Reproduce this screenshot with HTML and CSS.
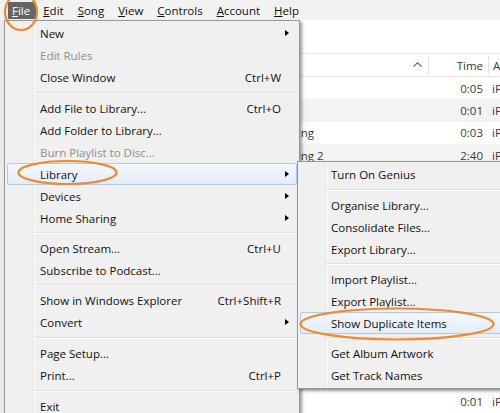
FILE: index.html
```html
<!DOCTYPE html>
<html>
<head>
<meta charset="utf-8">
<link rel="stylesheet" href="styles.css">
</head>
<body>
<div class="app">
  <nav class="menubar">
    <span class="mb-item active"><u>F</u>ile</span>
    <span class="mb-item"><u>E</u>dit</span>
    <span class="mb-item"><u>S</u>ong</span>
    <span class="mb-item"><u>V</u>iew</span>
    <span class="mb-item"><u>C</u>ontrols</span>
    <span class="mb-item"><u>A</u>ccount</span>
    <span class="mb-item"><u>H</u>elp</span>
  </nav>
  <div class="main">
    <div class="sidebar"></div>
    <div class="tracks">
      <div class="toolbar"></div>
      <div class="thead">
        <div class="c-name"><svg class="chev" width="9" height="5" viewBox="0 0 9 5"><polyline points="0.5,4.5 4.5,0.8 8.5,4.5" fill="none" stroke="#6d6d6d" stroke-width="1.2"/></svg></div>
        <div class="c-time">Time</div>
        <div class="c-artist">Artist</div>
      </div>
      <div class="row"><div class="c-name"></div><div class="c-time">0:05</div><div class="c-artist">iPhone</div></div>
      <div class="row alt"><div class="c-name"></div><div class="c-time">0:01</div><div class="c-artist">iPhone</div></div>
      <div class="row"><div class="c-name">New Recording</div><div class="c-time">0:03</div><div class="c-artist">iPhone</div></div>
      <div class="row alt"><div class="c-name">New Recording 2</div><div class="c-time">2:40</div><div class="c-artist">iPhone</div></div>
      <div class="row"><div class="c-name"></div><div class="c-time"></div><div class="c-artist"></div></div>
      <div class="row alt"><div class="c-name"></div><div class="c-time"></div><div class="c-artist"></div></div>
      <div class="row"><div class="c-name"></div><div class="c-time"></div><div class="c-artist"></div></div>
      <div class="row alt"><div class="c-name"></div><div class="c-time"></div><div class="c-artist"></div></div>
      <div class="row"><div class="c-name"></div><div class="c-time"></div><div class="c-artist"></div></div>
      <div class="row alt"><div class="c-name"></div><div class="c-time"></div><div class="c-artist"></div></div>
      <div class="row"><div class="c-name"></div><div class="c-time"></div><div class="c-artist"></div></div>
      <div class="row alt"><div class="c-name"></div><div class="c-time"></div><div class="c-artist"></div></div>
      <div class="row"><div class="c-name"></div><div class="c-time"></div><div class="c-artist"></div></div>
      <div class="row alt"><div class="c-name"></div><div class="c-time"></div><div class="c-artist"></div></div>
      <div class="row"><div class="c-name"></div><div class="c-time">0:01</div><div class="c-artist">iPhone</div></div>
    </div>
  </div>

  <div class="menu file-menu">
    <div class="mi"><span>New</span><i class="arrow"></i></div>
    <div class="mi dis"><span>Edit Rules</span></div>
    <div class="mi"><span>Close Window</span><span class="sc">Ctrl+W</span></div>
    <div class="sep s9"></div>
    <div class="mi"><span>Add File to Library...</span><span class="sc">Ctrl+O</span></div>
    <div class="mi"><span>Add Folder to Library...</span></div>
    <div class="mi dis"><span>Burn Playlist to Disc...</span></div>
    <div class="mi hl"><span>Library</span><i class="arrow"></i></div>
    <div class="mi"><span>Devices</span><i class="arrow"></i></div>
    <div class="mi"><span>Home Sharing</span><i class="arrow"></i></div>
    <div class="sep"></div>
    <div class="mi"><span>Open Stream...</span><span class="sc">Ctrl+U</span></div>
    <div class="mi"><span>Subscribe to Podcast...</span></div>
    <div class="sep"></div>
    <div class="mi"><span>Show in Windows Explorer</span><span class="sc">Ctrl+Shift+R</span></div>
    <div class="mi"><span>Convert</span><i class="arrow"></i></div>
    <div class="sep s9"></div>
    <div class="mi"><span>Page Setup...</span></div>
    <div class="mi"><span>Print...</span><span class="sc">Ctrl+P</span></div>
    <div class="sep s9"></div>
    <div class="mi"><span>Exit</span></div>
  </div>

  <div class="menu sub-menu">
    <div class="mi"><span>Turn On Genius</span></div>
    <div class="sep s9"></div>
    <div class="mi"><span>Organise Library...</span></div>
    <div class="mi"><span>Consolidate Files...</span></div>
    <div class="mi"><span>Export Library...</span></div>
    <div class="sep"></div>
    <div class="mi"><span>Import Playlist...</span></div>
    <div class="mi"><span>Export Playlist...</span></div>
    <div class="mi hl"><span>Show Duplicate Items</span></div>
    <div class="sep"></div>
    <div class="mi"><span>Get Album Artwork</span></div>
    <div class="mi"><span>Get Track Names</span></div>
  </div>

  <svg class="annot" width="500" height="413" viewBox="0 0 500 413">
    <ellipse cx="21" cy="12" rx="16" ry="18" fill="none" stroke="#f08a2c" stroke-width="2.2"/>
    <ellipse cx="67.5" cy="172.5" rx="49" ry="11.5" fill="none" stroke="#f08a2c" stroke-width="2.2"/>
    <ellipse cx="397" cy="324" rx="96.5" ry="15.5" fill="none" stroke="#f08a2c" stroke-width="2.2"/>
  </svg>
</div>
</body>
</html>
```

FILE: styles.css
```css
* { box-sizing: border-box; }
html, body { margin: 0; padding: 0; }
body {
  font-family: "Open Sans", "Noto Sans", "DejaVu Sans", sans-serif;
  font-size: 11.5px;
  color: #111;
  background: #fff;
}
.app {
  position: relative;
  width: 500px;
  height: 413px;
  overflow: hidden;
  background: #fff;
  display: flex;
  flex-direction: column;
}

/* menu bar */
.menubar {
  height: 20px;
  flex: none;
  background: #f2f2f2;
  display: flex;
  align-items: flex-start;
  padding: 2px 0 0 8px;
}
.mb-item {
  padding: 0 7px;
  height: 17px;
  line-height: 17px;
  color: #111;
  white-space: nowrap;
}
.mb-item u { text-underline-offset: 1px; }
.mb-item.active {
  background: #656565;
  color: #fff;
  padding: 0 6px 0 4px;
}

/* window content */
.main { flex: 1; display: flex; min-height: 0; }
.sidebar { width: 4px; flex: none; background: #ebebeb; }
.tracks { flex: 1; display: flex; flex-direction: column; min-width: 0; }
.toolbar { height: 33px; flex: none; background: #fff; }
.thead {
  height: 24px;
  flex: none;
  border-top: 1px solid #e4e4e4;
  border-bottom: 1px solid #e4e4e4;
  display: flex;
  padding: 2px 0;
  color: #3a3a3a;
}
.c-name {
  width: 424px;
  flex: none;
  white-space: nowrap;
  overflow: hidden;
  padding-left: 229px;
}
.c-time {
  width: 60px;
  flex: none;
  text-align: right;
  padding-right: 5px;
}
.c-artist {
  flex: 1;
  padding-left: 4px;
  white-space: nowrap;
  overflow: hidden;
}
.thead .c-name {
  display: flex;
  justify-content: flex-end;
  align-items: center;
  padding-right: 6px;
}
.thead .c-time, .thead .c-artist {
  border-left: 1px solid #e4e4e4;
  line-height: 19px;
}
.thead .c-artist { padding-left: 4px; }
.chev { display: block; margin-top: -2px; }
.row {
  height: 22.4px;
  flex: none;
  display: flex;
  align-items: center;
  color: #3a3a3a;
}
.row.alt { background: #f3f3f3; }

/* popup menus */
.menu {
  position: absolute;
  border: 1px solid #979797;
  background-color: #f0f0f0;
  box-shadow: 2px 2px 3px rgba(0, 0, 0, 0.4);
  color: #111;
}
.file-menu {
  left: 4px;
  top: 20px;
  width: 296px;
  height: 410px;
  padding: 1px 2px;
  background-image: linear-gradient(to right, transparent 28px, #e2e3e3 28px, #e2e3e3 29px, #fff 29px, #fff 30px, transparent 30px);
  z-index: 2;
}
.sub-menu {
  left: 297px;
  top: 161px;
  width: 230px;
  height: 228px;
  padding: 1px 2px 2px;
  background-image: linear-gradient(to right, transparent 27px, #e2e3e3 27px, #e2e3e3 28px, #fff 28px, #fff 29px, transparent 29px);
  z-index: 3;
}
.mi {
  height: 22px;
  display: flex;
  align-items: center;
  padding: 0 16px 0 33px;
  white-space: nowrap;
  border-radius: 3px;
}
.sub-menu .mi { padding-left: 31px; }
.mi .sc { margin-left: auto; }
.mi .arrow {
  margin-left: auto;
  margin-right: -8px;
  width: 0;
  height: 0;
  border-left: 4px solid #000;
  border-top: 3.5px solid transparent;
  border-bottom: 3.5px solid transparent;
}
.mi.dis { color: #8e8e8e; }
.mi.hl {
  background: linear-gradient(#f4f8fd, #e2ecf9);
  box-shadow: inset 0 0 0 1px #aecbee;
}
.sep {
  height: 8px;
  margin-left: 28px;
  padding-top: 3px;
}
.sep.s9 { height: 9px; padding-top: 4px; }
.sub-menu .sep { margin-left: 26px; }
.sep::before {
  content: "";
  display: block;
  border-top: 1px solid #e0e0e0;
  border-bottom: 1px solid #fff;
}

.annot {
  position: absolute;
  left: 0;
  top: 0;
  z-index: 5;
  pointer-events: none;
}
```
